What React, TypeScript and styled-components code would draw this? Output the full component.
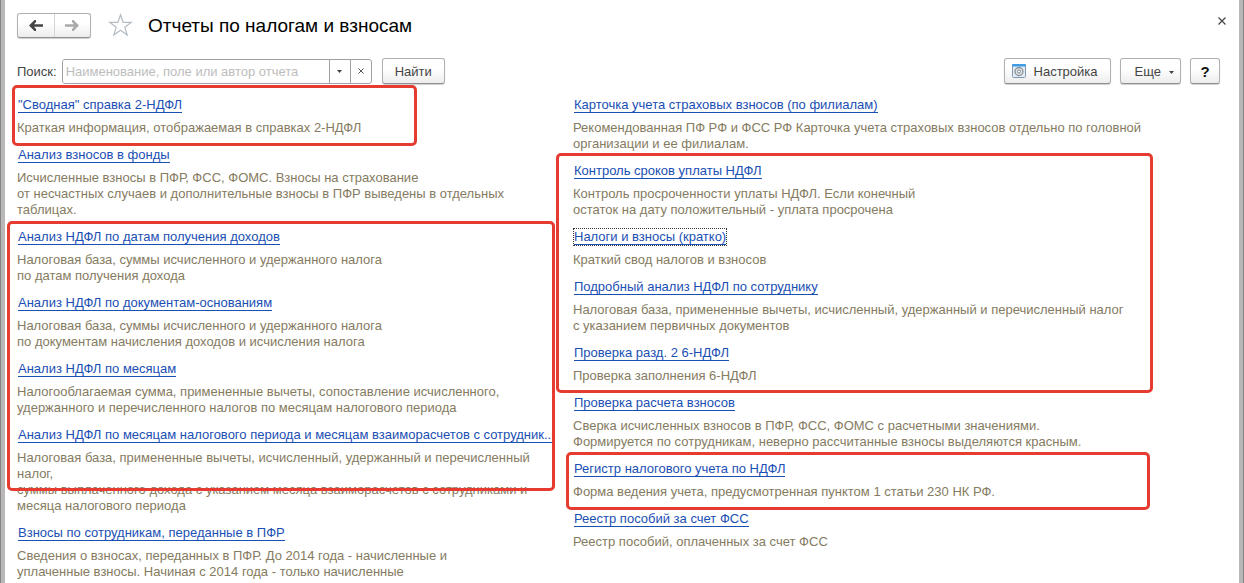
import React from "react";
import styled, { createGlobalStyle, css } from "styled-components";

const Global = createGlobalStyle`
  *, *::before, *::after { box-sizing: border-box; }
  body {
    margin: 0;
    border: solid #858585;
    border-width: 0 1px;
    background: #fff;
    color: #444;
    font: 13px/16px "Liberation Sans", Arial, sans-serif;
  }
  button, input { font: inherit; color: inherit; margin: 0; }
`;

const Window = styled.main`
  min-height: 100vh;
  padding: 12px 19px 0 12px;
  border: solid #b9b7b7;
  border-width: 0 4px;
  overflow: hidden;
`;

const TitleBar = styled.header`
  display: flex;
  align-items: center;
  height: 26px;
`;

const raised = css`
  border: 1px solid #b0b0b0;
  border-bottom-color: #8f8f8f;
  border-radius: 3px;
  background: linear-gradient(#fff 40%, #ededed);
  box-shadow: 0 1px 1px #d0d0d0;
`;

const History = styled.nav`
  display: flex;
  width: 74px;
  height: 25px;
  ${raised}
`;

const HistoryButton = styled.button`
  flex: 1;
  display: grid;
  place-items: center;
  padding: 0;
  border: 0;
  background: none;
  color: #444;
  & + & { border-left: 1px solid #d4d4d4; }
  &:disabled { color: #aaa; }
`;

const PlainButton = styled.button`
  display: grid;
  place-items: center;
  padding: 0;
  border: 0;
  background: none;
  color: #444;
`;

const Star = styled(PlainButton)`
  margin-left: 17px;
`;

const Close = styled(PlainButton)`
  width: 15px;
  height: 15px;
  margin: 0 -9px 8px auto;
`;

const Title = styled.h1`
  margin: 2px 0 0 15px;
  font-size: 19px;
  line-height: 24px;
  font-weight: 400;
  color: #000;
`;

const Toolbar = styled.div`
  display: flex;
  align-items: center;
  height: 26px;
  margin-top: 20px;
`;

const SearchLabel = styled.label`
  padding-top: 2px;
`;

const SearchBox = styled.div`
  display: flex;
  width: 310px;
  height: 25px;
  margin: 0 10px 0 5px;
  border: 1px solid #a0a0a0;
  border-radius: 3px;
  overflow: hidden;
`;

const SearchInput = styled.input`
  flex: 1;
  min-width: 0;
  padding: 2px 3px 0;
  border: 0;
  outline: 0;
  &::placeholder { color: #bdbdbd; opacity: 1; }
`;

const SearchAddon = styled(PlainButton)`
  width: 21px;
  border-left: 1px solid #a0a0a0;
`;

const Button = styled.button<{ $strong?: boolean }>`
  display: flex;
  align-items: center;
  justify-content: center;
  height: 26px;
  padding: 2px 12px 0;
  ${raised}
  ${(p) => p.$strong && css`
    width: 30px;
    padding: 2px 0 0;
    font-size: 15px;
    font-weight: 700;
    color: #111;
  `}
`;

const Actions = styled.div`
  display: flex;
  gap: 9px;
  margin-left: auto;
`;

const Columns = styled.div`
  display: grid;
  grid-template-columns: minmax(0, 542fr) minmax(0, 647fr);
  column-gap: 14px;
  margin-top: 13px;
`;

const Group = styled.section`
  position: relative;
`;

const Frame = styled.div<{ $inset: string; $width?: number }>`
  position: absolute;
  inset: ${(p) => p.$inset};
  ${(p) => p.$width && `width: ${p.$width}px;`}
  border: 3px solid #e53b30;
  border-radius: 5px;
  pointer-events: none;
  z-index: 1;
`;

const Report = styled.article`
  padding-bottom: 11px;
`;

const ReportTitle = styled.h2`
  display: flex;
  margin: 0 0 7px 1px;
  font-size: 13px;
  line-height: 15px;
  font-weight: 400;
`;

const ReportLink = styled.a<{ $focused?: boolean }>`
  white-space: nowrap;
  color: #1a4fb4;
  text-decoration: none;
  border-bottom: 1px solid #1a4fb4;
  ${(p) => p.$focused && "outline: 1px dotted #333;"}
`;

const Description = styled.p`
  margin: 0;
  color: #857b5f;
  white-space: pre-line;
`;

type ReportData = { title: string; text: string; focused?: boolean };
type GroupData = { frame?: { inset: string; width?: number }; reports: ReportData[] };

const left: GroupData[] = [
  {
    frame: { inset: "-12px auto 1px -5px", width: 405 },
    reports: [{ title: '"Сводная" справка 2-НДФЛ', text: "Краткая информация, отображаемая в справках 2-НДФЛ" }],
  },
  {
    reports: [{
      title: "Анализ взносов в фонды",
      text: "Исчисленные взносы в ПФР, ФСС, ФОМС. Взносы на страхование\nот несчастных случаев и дополнительные взносы в ПФР выведены в отдельных\nтаблицах.",
    }],
  },
  {
    frame: { inset: "-8px 4px 34px -10px" },
    reports: [
      { title: "Анализ НДФЛ по датам получения доходов", text: "Налоговая база, суммы исчисленного и удержанного налога\nпо датам получения дохода" },
      { title: "Анализ НДФЛ по документам-основаниям", text: "Налоговая база, суммы исчисленного и удержанного налога\nпо документам начисления доходов и исчисления налога" },
      { title: "Анализ НДФЛ по месяцам", text: "Налогооблагаемая сумма, примененные вычеты, сопоставление исчисленного,\nудержанного и перечисленного налогов по месяцам налогового периода" },
      {
        title: "Анализ НДФЛ по месяцам налогового периода и месяцам взаиморасчетов с сотрудник...",
        text: "Налоговая база, примененные вычеты, исчисленный, удержанный и перечисленный\nналог,\nсуммы выплаченного дохода с указанием месяца взаиморасчетов с сотрудниками и\nмесяца налогового периода",
      },
    ],
  },
  {
    reports: [{
      title: "Взносы по сотрудникам, переданные в ПФР",
      text: "Сведения о взносах, переданных в ПФР. До 2014 года - начисленные и\nуплаченные взносы. Начиная с 2014 года - только начисленные",
    }],
  },
];

const right: GroupData[] = [
  {
    reports: [{
      title: "Карточка учета страховых взносов (по филиалам)",
      text: "Рекомендованная ПФ РФ и ФСС РФ Карточка учета страховых взносов отдельно по головной\nорганизации и ее филиалам.",
    }],
  },
  {
    frame: { inset: "-10px auto 2px -17px", width: 597 },
    reports: [
      { title: "Контроль сроков уплаты НДФЛ", text: "Контроль просроченности уплаты НДФЛ. Если конечный\nостаток на дату положительный - уплата просрочена" },
      { title: "Налоги и взносы (кратко)", text: "Краткий свод налогов и взносов", focused: true },
      { title: "Подробный анализ НДФЛ по сотруднику", text: "Налоговая база, примененные вычеты, исчисленный, удержанный и перечисленный налог\nс указанием первичных документов" },
      { title: "Проверка разд. 2 6-НДФЛ", text: "Проверка заполнения 6-НДФЛ" },
    ],
  },
  {
    reports: [{
      title: "Проверка расчета взносов",
      text: "Сверка исчисленных взносов в ПФР, ФСС, ФОМС с расчетными значениями.\nФормируется по сотрудникам, неверно рассчитанные взносы выделяются красным.",
    }],
  },
  {
    frame: { inset: "-9px auto 1px -7px", width: 584 },
    reports: [{ title: "Регистр налогового учета по НДФЛ", text: "Форма ведения учета, предусмотренная пунктом 1 статьи 230 НК РФ." }],
  },
  {
    reports: [{ title: "Реестр пособий за счет ФСС", text: "Реестр пособий, оплаченных за счет ФСС" }],
  },
];

const Arrow = ({ flip }: { flip?: boolean }) => (
  <svg width="14" height="11" viewBox="0 0 14 11" fill="currentColor" aria-hidden="true">
    <path d={flip ? "M14 5.5 8.500 0H7v2l2 2.200H0v2.600h9L7 9v2h1.500z" : "M0 5.500 5.500 0H7v2L5 4.200h9v2.600H5L7 9v2H5.500z"} />
  </svg>
);

const Caret = () => (
  <svg width="5" height="3" viewBox="0 0 5 3" fill="currentColor" aria-hidden="true">
    <path d="M0 0h5L2.500 3z" />
  </svg>
);

const CaretSlot = styled.span`
  display: flex;
  margin: 1px -6px 0 8px;
`;

const MenuLabel = styled.span`
  padding-left: 2px;
`;

const IconSlot = styled.span`
  display: flex;
  margin: 0 8px 2px -5px;
`;

const Cross = ({ size }: { size: number }) => (
  <svg width={size} height={size} viewBox="0 0 8 8" fill="none" stroke="currentColor" strokeWidth="1.2" aria-hidden="true">
    <path d="M.5.5l7 7M7.500.5l-7 7" />
  </svg>
);

const SettingsIcon = () => (
  <svg width="14" height="14" viewBox="0 0 14 14" fill="none" aria-hidden="true">
    <rect x=".5" y=".5" width="13" height="13" rx="1" fill="#e4edf5" stroke="#8298ae" />
    <path d="M0 1q0-1 1-1h12q1 0 1 1v1.500H0z" fill="#3f9be3" />
    <circle cx="7" cy="7.500" r="4" fill="#dfe3e6" stroke="#8a949c" strokeWidth="1.300" />
    <circle cx="7" cy="7.500" r="1.500" fill="#fff" stroke="#7b858d" />
  </svg>
);

const Column = ({ groups }: { groups: GroupData[] }) => (
  <div>
    {groups.map((group) => (
      <Group key={group.reports[0].title}>
        {group.reports.map((r) => (
          <Report key={r.title}>
            <ReportTitle><ReportLink href="#" $focused={r.focused}>{r.title}</ReportLink></ReportTitle>
            <Description>{r.text}</Description>
          </Report>
        ))}
        {group.frame && <Frame $inset={group.frame.inset} $width={group.frame.width} />}
      </Group>
    ))}
  </div>
);

export default function App() {
  return (
    <>
      <Global />
      <Window>
        <TitleBar>
          <History aria-label="История">
            <HistoryButton aria-label="Назад"><Arrow /></HistoryButton>
            <HistoryButton aria-label="Вперед" disabled><Arrow flip /></HistoryButton>
          </History>
          <Star aria-label="В избранное">
            <svg width="25" height="24" viewBox="0 0 25 24" fill="#fff" stroke="#b4bcc4" strokeWidth="1.200" aria-hidden="true">
              <path d="M12.500 1.800l2.600 7.500h8.200l-6.500 4.900 2.400 7.900-6.700-4.800-6.700 4.800 2.400-7.900L1.700 9.300h8.200z" />
            </svg>
          </Star>
          <Title>Отчеты по налогам и взносам</Title>
          <Close aria-label="Закрыть"><Cross size={8} /></Close>
        </TitleBar>
        <Toolbar>
          <SearchLabel htmlFor="report-search">Поиск:</SearchLabel>
          <SearchBox>
            <SearchInput id="report-search" placeholder="Наименование, поле или автор отчета" />
            <SearchAddon aria-label="Показать список"><Caret /></SearchAddon>
            <SearchAddon aria-label="Очистить"><Cross size={6} /></SearchAddon>
          </SearchBox>
          <Button>Найти</Button>
          <Actions>
            <Button><IconSlot><SettingsIcon /></IconSlot>Настройка</Button>
            <Button><MenuLabel>Еще</MenuLabel><CaretSlot><Caret /></CaretSlot></Button>
            <Button $strong aria-label="Справка">?</Button>
          </Actions>
        </Toolbar>
        <Columns>
          <Column groups={left} />
          <Column groups={right} />
        </Columns>
      </Window>
    </>
  );
}
